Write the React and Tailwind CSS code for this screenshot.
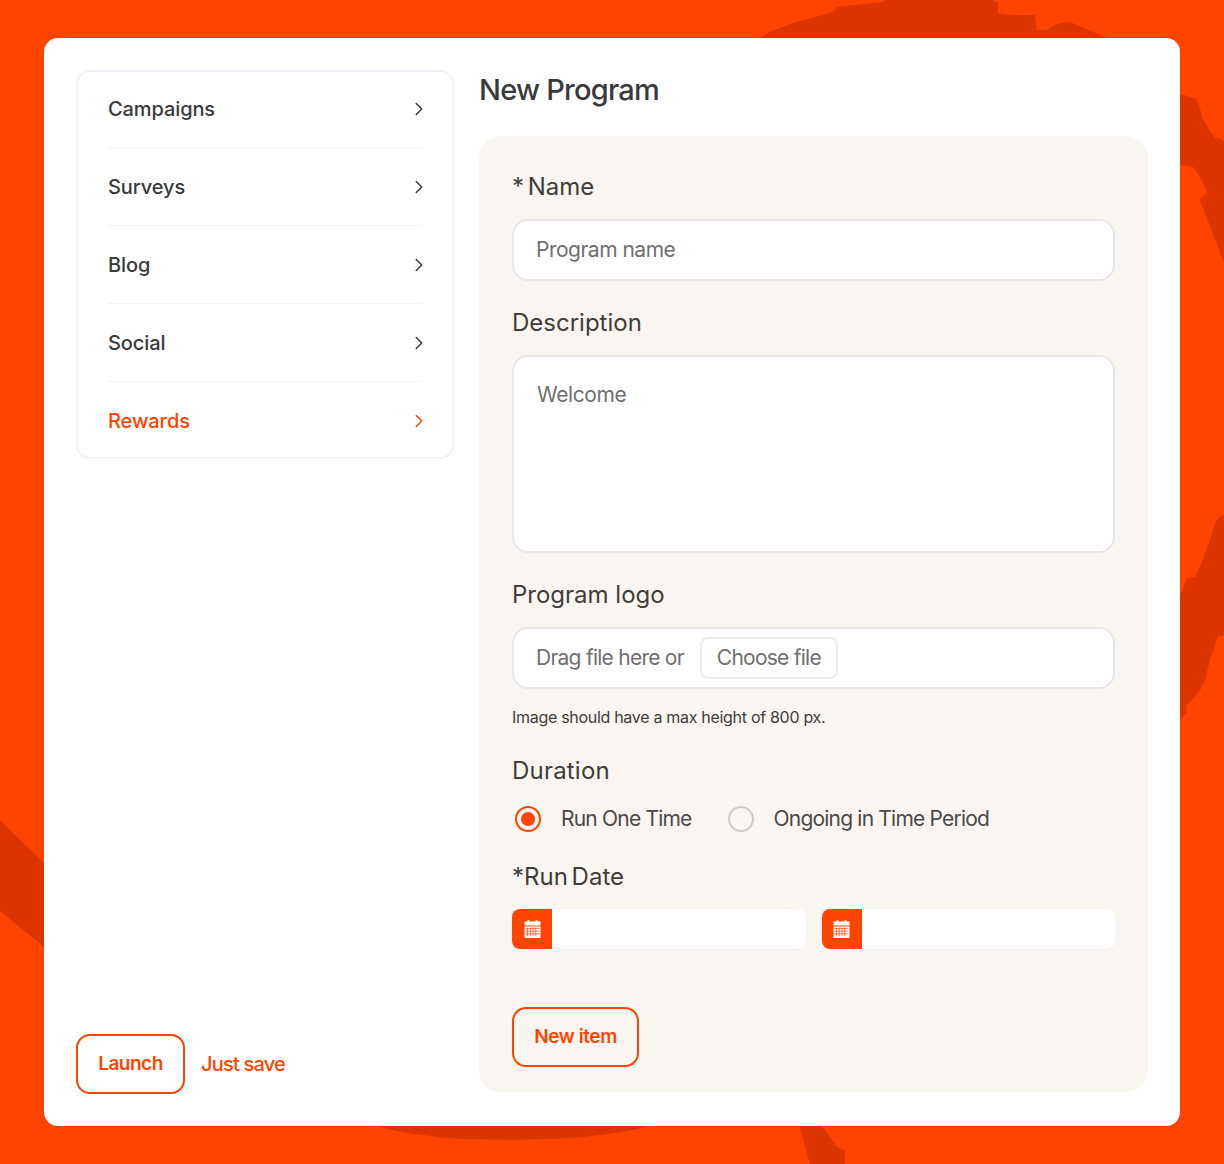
import React from "react";
import { ChevronRight } from "lucide-react";

const nav = ["Campaigns", "Surveys", "Blog", "Social", "Rewards"];

function Calendar() {
  return (
    <svg width="17" height="18" viewBox="0 0 17 18" fill="none">
      <rect x="3.6" y="0" width="1.8" height="3" fill="#fff" />
      <rect x="11.6" y="0" width="1.8" height="3" fill="#fff" />
      <path d="M0.5 1.5h16v4h-16z" fill="#fff" />
      <path d="M0.5 6.5h16V18h-16z" fill="#fff" />
      <path d="M1.5 8.6h14M1.5 11.2h14M1.5 13.8h14M3.4 7.5v8.5M6.2 7.5v8.5M9 7.5v8.5M11.8 7.5v8.5" stroke="#ff4400" strokeWidth="0.7" />
    </svg>
  );
}

function Label({ children, className = "" }) {
  return <div className={`h-8 text-[24px] leading-8 font-normal text-[#3f3d3a] ${className}`}>{children}</div>;
}

function DateField() {
  return (
    <div className="flex h-10 flex-1 overflow-hidden rounded-lg bg-white shadow-[0_1px_0_#f3f1f4]">
      <div className="flex w-10 items-center justify-center bg-[#ff4400]">
        <Calendar />
      </div>
    </div>
  );
}

export default function App() {
  return (
    <div className="relative h-[1164px] w-[1224px] overflow-hidden bg-[#ff4400] pt-[38px] pl-[44px] font-['Inter',sans-serif]">
      <svg className="absolute inset-0" width="1224" height="1164" viewBox="0 0 1224 1164">
        <g fill="#dc3500">
          <path d="M760 38L770 32L793 23L833 12L837 7L882 2L885 0H993L998 3V13L1012 15L1035 15L1037 30L1047 30L1057 24L1070 22L1107 38Z" />
          <path d="M1180 94L1195 98Q1200 105 1202 117Q1207 128 1215 138L1222 139L1224 142V263L1200 200L1207 192Q1201 177 1193 167L1180 165Z" />
          <path d="M1224 515Q1216 516 1213 530Q1208 550 1195 577L1187 578L1180 595V720L1187 712L1186 705Q1200 695 1205 680L1210 660L1218 637L1224 635Z" />
          <path d="M0 820L44 863V947L0 911Z" />
          <path d="M378 1126Q400 1134 460 1139Q520 1141 570 1138Q620 1134 650 1126Z" />
          <path d="M800 1126L803 1140L810 1164H845V1150L838 1148L822 1126Z" />
        </g>
      </svg>
      <div className="relative flex h-[1088px] w-[1136px] gap-[25px] rounded-[14px] bg-white pt-8 pr-8 pb-[34px] pl-8">
        <div className="flex w-[378px] flex-col justify-between">
          <div className="rounded-[14px] border-2 border-[#f1f1f9] px-[30px]">
            {nav.map((item, i) => {
              const first = i === 0;
              const last = i === nav.length - 1;
              return (
                <div
                  key={item}
                  className={`flex items-center justify-between ${first ? "h-[76px] pb-[1px] border-b border-[#f3f3f8]" : last ? "h-[75px] pt-[3px]" : "h-[78px] border-b border-[#f3f3f8]"} ${last ? "text-[#ff4400]" : "text-[#3a3a3c]"}`}
                >
                  <span className="text-[20px] font-medium tracking-[-0.1px]">{item}</span>
                  <ChevronRight size={22} strokeWidth={1.6} className="mr-[-8px]" />
                </div>
              );
            })}
          </div>
          <div className="mb-[-2px] flex items-center gap-4">
            <button className="h-[60px] w-[109px] rounded-[14px] border-2 border-[#ff4400] text-[19px] font-semibold tracking-[-0.5px] text-[#ff4400]">Launch</button>
            <span className="text-[20px] font-medium tracking-[-0.8px] text-[#ff4400]">Just save</span>
          </div>
        </div>
        <div className="flex w-[669px] flex-col">
          <h1 className="h-[40px] text-[29px] leading-10 font-medium tracking-[-0.75px] text-[#3a3a3c]">New Program</h1>
          <div className="mt-[26px] flex-1 rounded-[22px] bg-[#f9f5f1] px-[33px] pt-[35px]">
            <Label className="[word-spacing:-3px]">* Name</Label>
            <div className="mt-4 flex h-[62px] items-center rounded-[16px] border-2 border-[#e9e6ea] bg-white px-[22px] text-[21px] tracking-[-0.5px] text-[#6f6f6f]">Program name</div>
            <Label className="mt-[26px]">Description</Label>
            <div className="mt-4 h-[198px] rounded-[16px] border-2 border-[#e9e6ea] bg-white px-[23px] pt-[24px] text-[21px] leading-[28px] tracking-[-0.4px] text-[#6f6f6f]">Welcome</div>
            <Label className="mt-[26px]">Program logo</Label>
            <div className="mt-4 flex h-[62px] items-center gap-[16px] rounded-[16px] border-2 border-[#e9e6ea] bg-white px-[22px] text-[21px] tracking-[-0.75px] text-[#6f6f6f]">
              <span>Drag file here or</span>
              <span className="flex h-[42px] w-[138px] items-center justify-center rounded-[8px] border-2 border-[#eeebee]">Choose file</span>
            </div>
            <div className="mt-[18px] h-5 text-[16px] leading-5 tracking-[-0.3px] text-[#3f3d3a]">Image should have a max height of 800 px.</div>
            <Label className="mt-[28px] tracking-[0.2px]">Duration</Label>
            <div className="mt-[16px] flex h-8 items-center pl-[3px] text-[21px] tracking-[-0.8px] text-[#4b4947]">
              <span className="flex h-[26px] w-[26px] items-center justify-center rounded-full border-2 border-[#ff4400]">
                <span className="h-[14px] w-[14px] rounded-full bg-[#ff4400]" />
              </span>
              <span className="ml-[20px]">Run One Time</span>
              <span className="ml-[36px] h-[26px] w-[26px] rounded-full border-2 border-[#cfcbc8]" />
              <span className="ml-[20px]">Ongoing in Time Period</span>
            </div>
            <Label className="mt-[26px] [word-spacing:-3px]">*Run Date</Label>
            <div className="mt-4 flex gap-[16px]">
              <DateField />
              <DateField />
            </div>
            <button className="mt-[58px] h-[60px] w-[127px] rounded-[14px] border-2 border-[#ff4400] text-[19px] font-semibold tracking-[-0.4px] text-[#ff4400]">New item</button>
          </div>
        </div>
      </div>
    </div>
  );
}
